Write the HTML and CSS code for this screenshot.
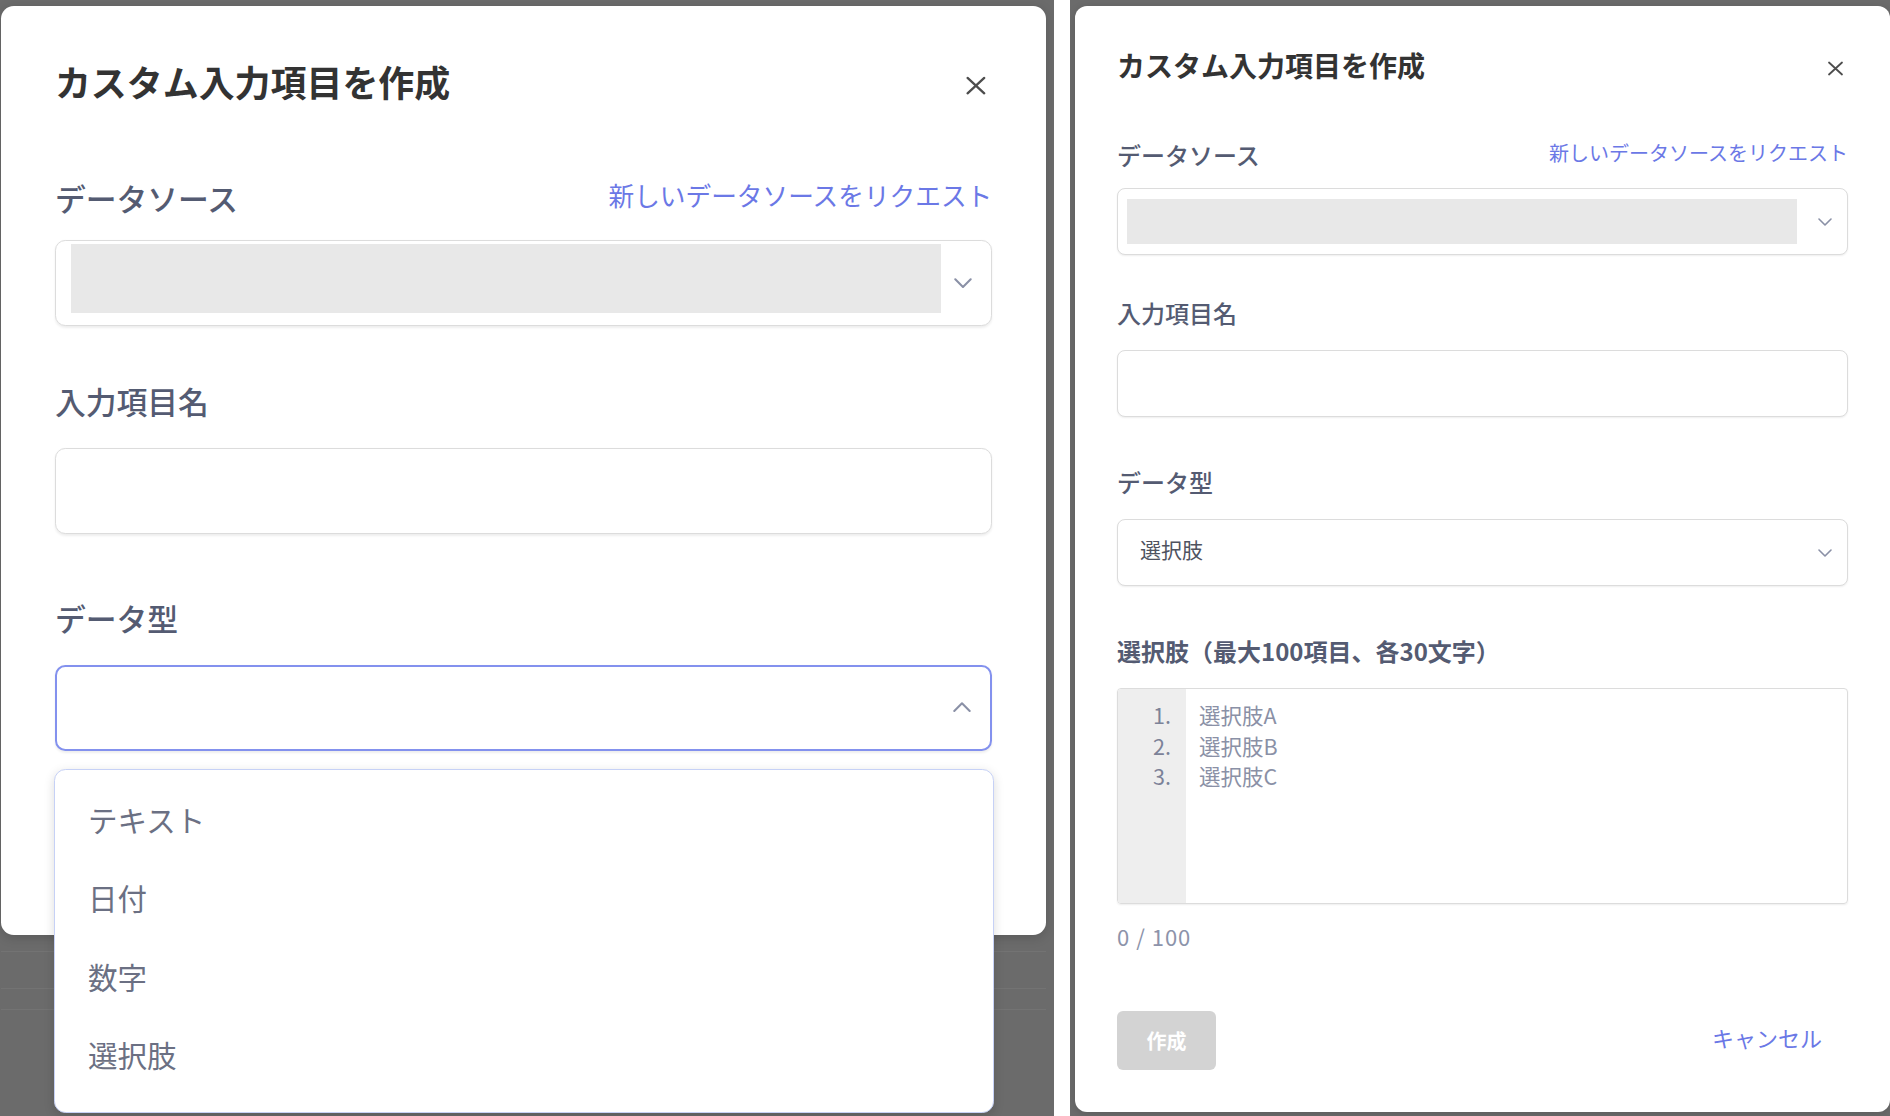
FILE: index.html
```html
<!DOCTYPE html>
<html lang="ja">
<head>
<meta charset="utf-8">
<title>カスタム入力項目を作成</title>
<link rel="stylesheet" href="styles.css">
</head>
<body>
<main class="stage">
  <section class="shot shot-left">
    <div class="modal modal-zoomed">
      <header class="modal-header">
        <h2 class="modal-title">カスタム入力項目を作成</h2>
        <button class="close-btn" type="button" aria-label="閉じる">
          <svg viewBox="0 0 17 15" width="17" height="15"><path d="M2 1.5L15 13.5M15 1.5L2 13.5" /></svg>
        </button>
      </header>

      <div class="field">
        <div class="label-row label-row-first">
          <span class="label">データソース</span>
          <a class="link" href="#">新しいデータソースをリクエスト</a>
        </div>
        <div class="select select-source">
          <span class="redact redact-lg"></span>
          <svg class="chevron" viewBox="0 0 14 8" width="14" height="8"><path d="M1 1L7 7L13 1" /></svg>
        </div>
      </div>

      <div class="field field-tight">
        <div class="label-row"><span class="label">入力項目名</span></div>
        <div class="input"></div>
      </div>

      <div class="field">
        <div class="label-row"><span class="label">データ型</span></div>
        <div class="select-wrap">
          <div class="select select-open">
            <svg class="chevron" viewBox="0 0 14 8" width="14" height="8"><path d="M1 7L7 1L13 7" /></svg>
          </div>
          <ul class="menu">
            <li class="menu-item">テキスト</li>
            <li class="menu-item">日付</li>
            <li class="menu-item">数字</li>
            <li class="menu-item">選択肢</li>
          </ul>
        </div>
      </div>
    </div>
    <div class="backdrop-rows">
      <div class="backdrop-row"></div>
      <div class="backdrop-row"></div>
      <div class="backdrop-row"></div>
    </div>
  </section>

  <section class="shot shot-right">
    <div class="modal">
      <header class="modal-header">
        <h2 class="modal-title">カスタム入力項目を作成</h2>
        <button class="close-btn" type="button" aria-label="閉じる">
          <svg viewBox="0 0 17 15" width="17" height="15"><path d="M2 1.5L15 13.5M15 1.5L2 13.5" /></svg>
        </button>
      </header>

      <div class="field">
        <div class="label-row label-row-first">
          <span class="label">データソース</span>
          <a class="link" href="#">新しいデータソースをリクエスト</a>
        </div>
        <div class="select select-source">
          <span class="redact"></span>
          <svg class="chevron" viewBox="0 0 14 8" width="14" height="8"><path d="M1 1L7 7L13 1" /></svg>
        </div>
      </div>

      <div class="field field-tight">
        <div class="label-row"><span class="label">入力項目名</span></div>
        <div class="input"></div>
      </div>

      <div class="field">
        <div class="label-row"><span class="label">データ型</span></div>
        <div class="select">
          <span class="select-value">選択肢</span>
          <svg class="chevron" viewBox="0 0 14 8" width="14" height="8"><path d="M1 1L7 7L13 1" /></svg>
        </div>
      </div>

      <div class="field">
        <div class="label-row"><span class="label label-strong">選択肢（最大100項目、各30文字）</span></div>
        <div class="numbered-area">
          <div class="gutter">
            <div>1.</div>
            <div>2.</div>
            <div>3.</div>
          </div>
          <div class="area-text">
            <div>選択肢A</div>
            <div>選択肢B</div>
            <div>選択肢C</div>
          </div>
        </div>
        <div class="counter">0 / 100</div>
      </div>

      <footer class="modal-footer">
        <button class="btn-primary" type="button" disabled>作成</button>
        <button class="btn-text" type="button">キャンセル</button>
      </footer>
    </div>
  </section>
</main>
</body>
</html>
```

FILE: styles.css
```css
* {
  box-sizing: border-box;
}

html,
body {
  margin: 0;
  background: #ffffff;
}

body {
  font-family: "Noto Sans CJK JP", "Noto Sans", sans-serif;
}

.stage {
  display: flex;
  gap: 16px;
  height: 1116px;
  overflow: hidden;
}

.shot {
  background: #6b6b6b;
  overflow: hidden;
  position: relative;
}

.shot-left {
  width: 1054px;
  padding: 6px 8px 0 1px;
}

.shot-right {
  flex: 1;
  padding: 6px 0 5px 5px;
}

/* ---------- modal ---------- */

.modal {
  position: relative;
  z-index: 1;
  width: 815px;
  background: #ffffff;
  border-radius: 12px;
  padding: 39px 42px 42px;
  box-shadow: 0 2px 8px rgba(0, 0, 0, 0.15);
}

.modal-zoomed {
  zoom: 1.284;
  width: 814px;
  border-radius: 10px;
  padding-bottom: 144px;
}

.modal-header {
  display: flex;
  align-items: center;
  justify-content: space-between;
  height: 40px;
  margin-bottom: 54px;
}

.modal-title {
  margin: 0;
  font-size: 28px;
  line-height: 40px;
  font-weight: 700;
  color: #333333;
}

.close-btn {
  display: flex;
  width: 17px;
  height: 15px;
  margin: 6px 4px 0 0;
  padding: 0;
  border: 0;
  background: none;
}

.close-btn path {
  fill: none;
  stroke: #4d4d4d;
  stroke-width: 1.8;
  stroke-linecap: round;
}

/* ---------- fields ---------- */

.field + .field {
  margin-top: 49px;
}

.field + .field-tight {
  margin-top: 42px;
}

.label-row {
  display: flex;
  align-items: center;
  justify-content: space-between;
  height: 32px;
  margin-bottom: 21px;
}

.label-row-first {
  margin-bottom: 17px;
}

.label {
  font-size: 24px;
  line-height: 32px;
  font-weight: 500;
  color: #545b72;
}

.label-strong {
  font-weight: 700;
}

.link {
  font-size: 20px;
  line-height: 28px;
  color: #6b78e6;
  text-decoration: none;
  margin-top: -4px;
}

.select,
.input {
  display: flex;
  align-items: center;
  height: 67px;
  border: 1px solid #dcdcdc;
  border-radius: 8px;
  background: #ffffff;
  box-shadow: 0 1px 2px rgba(0, 0, 0, 0.07);
}

.select {
  padding: 0 15px 0 22px;
}

.select-source {
  padding-left: 9px;
}

.select-open {
  border: 1.6px solid #8391ee;
}

.redact {
  flex: 1;
  align-self: stretch;
  margin: 10px 21px 10px 0;
  background: #e8e8e8;
}

.redact-lg {
  margin: 3px 10px 9px 3px;
}

.select-value {
  margin-bottom: 8px;
  font-size: 21px;
  color: #4f5360;
}

.chevron {
  margin-left: auto;
  flex: none;
}

.chevron path {
  fill: none;
  stroke: #8a90a6;
  stroke-width: 1.6;
  stroke-linecap: round;
  stroke-linejoin: round;
}

.select-wrap {
  position: relative;
}

.menu {
  position: absolute;
  top: calc(100% + 14px);
  left: -1px;
  right: -1px;
  z-index: 2;
  height: 268px;
  margin: 0;
  padding: 9px 0 15px;
  list-style: none;
  background: #ffffff;
  border: 1.2px solid #c6d1f6;
  border-radius: 9px;
  box-shadow: 0 3px 8px rgba(0, 0, 0, 0.14);
}

.menu-item {
  height: 61px;
  line-height: 61px;
  padding-left: 26px;
  font-size: 23px;
  color: #6b7083;
}

/* ---------- numbered textarea ---------- */

.numbered-area {
  display: flex;
  height: 216px;
  border: 1px solid #dcdcdc;
  border-radius: 4px;
  overflow: hidden;
  box-shadow: 0 1px 2px rgba(0, 0, 0, 0.07);
  font-size: 21.5px;
  line-height: 30.6px;
}

.gutter {
  width: 68px;
  flex: none;
  padding: 11px 15px 0 0;
  background: #eeeeee;
  text-align: right;
  color: #7c8298;
}

.area-text {
  padding: 11px 14px 0 13px;
  color: #8a90a6;
}

.counter {
  margin-top: 18px;
  font-size: 22px;
  line-height: 28px;
  letter-spacing: 1px;
  color: #8d93aa;
}

/* ---------- footer ---------- */

.modal-footer {
  display: flex;
  align-items: center;
  justify-content: space-between;
  margin-top: 61px;
}

.btn-primary {
  width: 99px;
  height: 59px;
  border: 0;
  border-radius: 6px;
  background: #d3d3d3;
  color: #ffffff;
  font-family: inherit;
  font-size: 20px;
  font-weight: 700;
}

.btn-text {
  margin-bottom: 8px;
  padding: 0 26px 0 0;
  border: 0;
  background: none;
  color: #6b78e6;
  font-family: inherit;
  font-size: 22px;
}

/* ---------- dimmed page behind the left modal ---------- */

.backdrop-rows {
  display: flex;
  flex-direction: column;
  margin-top: 16px;
}

.backdrop-row {
  height: 37px;
  border-top: 1px solid rgba(255, 255, 255, 0.06);
}

.backdrop-row:nth-child(2) {
  height: 21px;
}
```
